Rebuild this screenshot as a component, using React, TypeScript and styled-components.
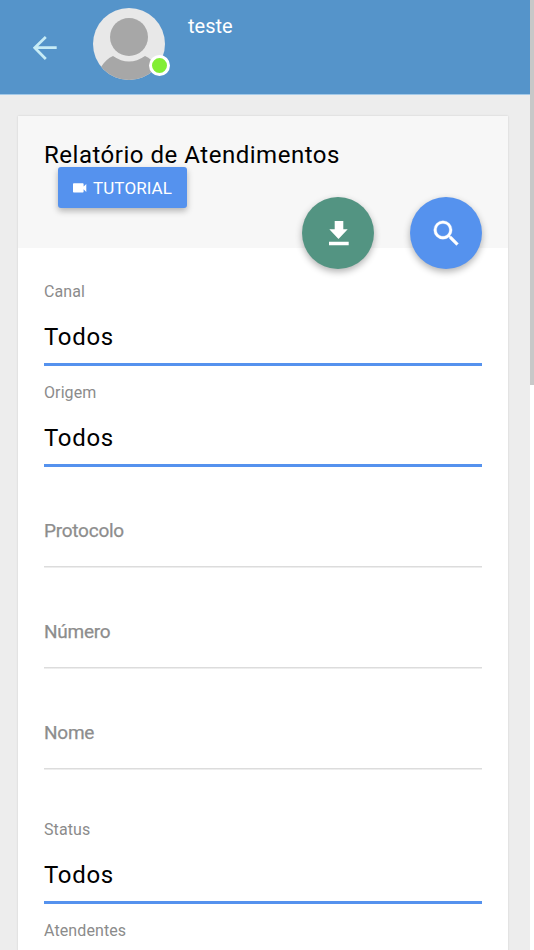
import React from "react";
import styled, { createGlobalStyle } from "styled-components";

const GlobalStyle = createGlobalStyle`
  *, *::before, *::after { box-sizing: border-box; }
  html, body { margin: 0; height: 950px; overflow: hidden; }
  body { background: #fff; font-family: Roboto, "Liberation Sans", sans-serif; color: #000; }
  button, input { font-family: inherit; }
`;

const Screen = styled.div`
  display: flex;
  width: 534px;
  height: 950px;
  overflow: hidden;
`;

const Page = styled.div`
  flex: 0 0 530px;
  height: 950px;
  background: #ededed;
  overflow: hidden;
`;

const ScrollThumb = styled.div`
  flex: 1;
  height: 385px;
  background: #c8c8c8;
`;

const TopBar = styled.header`
  display: flex;
  align-items: flex-start;
  height: 95px;
  background: #5594ca;
  border-bottom: 1px solid #a3c9e8;
`;

const BackButton = styled.button`
  margin: 36px 0 0 33px;
  padding: 0;
  width: 24px;
  height: 24px;
  border: 0;
  background: none;
`;

const Avatar = styled.div`
  position: relative;
  margin: 8px 0 0 36px;
  width: 72px;
  height: 72px;
`;

const OnlineDot = styled.span`
  position: absolute;
  left: 56px;
  top: 47px;
  width: 21px;
  height: 21px;
  border: 3px solid #fff;
  border-radius: 50%;
  background: #83ee34;
`;

const UserName = styled.span`
  margin: 13px 0 0 23px;
  font-size: 20px;
  line-height: 26px;
  color: #fff;
`;

const Card = styled.main`
  margin: 21px 22px 0 18px;
  height: 860px;
  background: #fff;
  box-shadow: 0 0 2px rgba(0, 0, 0, 0.13);
`;

const CardHeader = styled.div`
  display: flex;
  flex-direction: column;
  align-items: flex-start;
  height: 132px;
  padding: 26px 26px 0;
  background: #f7f7f7;
`;

const Title = styled.h1`
  margin: 0;
  height: 25px;
  font-size: 24px;
  font-weight: 400;
  line-height: 27px;
  letter-spacing: 0.52px;
  white-space: nowrap;
`;

const TutorialButton = styled.button`
  display: flex;
  align-items: center;
  gap: 5px;
  flex: none;
  width: 129px;
  height: 41px;
  margin-left: 14px;
  padding: 0 0 0 15px;
  border: 0;
  border-radius: 3px;
  background: #5592ee;
  box-shadow: 0 3px 6px rgba(0, 0, 0, 0.28);
  color: #fff;
  font-size: 17px;
  line-height: 20px;
  letter-spacing: 0.1px;
`;

const Actions = styled.div`
  display: flex;
  align-self: flex-end;
  flex: none;
  gap: 36px;
  margin-top: -11px;
`;

const RoundButton = styled.button<{ $color: string }>`
  display: flex;
  align-items: center;
  justify-content: center;
  width: 72px;
  height: 72px;
  padding: 0;
  border: 0;
  border-radius: 50%;
  background: ${({ $color }) => $color};
  box-shadow: 0 3px 7px rgba(0, 0, 0, 0.3);
`;

const Form = styled.form`
  padding: 17px 26px 0;
`;

const SelectField = styled.div<{ $gap?: number }>`
  height: 101px;
  margin-top: ${({ $gap = 0 }) => $gap}px;
  padding-top: 17px;
  border-bottom: 3px solid #5592ee;
`;

const Label = styled.div`
  font-size: 16px;
  line-height: 20px;
  letter-spacing: 0.1px;
  color: #8b8b8b;
`;

const Value = styled.div`
  margin-top: 19px;
  font-size: 24px;
  line-height: 32px;
  letter-spacing: 0.7px;
`;

const TextField = styled.input`
  display: block;
  width: 100%;
  height: 101px;
  padding: 26px 0 0;
  border: 0;
  background: linear-gradient(#dcdcdc, #dcdcdc) 0 99px / 100% 1.5px no-repeat;
  font-size: 19px;
  letter-spacing: -0.25px;
  outline: 0;
  &::placeholder { color: #8d8d8d; opacity: 1; -webkit-text-stroke: 0.25px #8d8d8d; }
`;

interface SelectProps {
  label: string;
  value?: string;
  gap?: number;
}

function Select({ label, value, gap }: SelectProps) {
  return (
    <SelectField $gap={gap}>
      <Label>{label}</Label>
      {value && <Value>{value}</Value>}
    </SelectField>
  );
}

export default function App() {
  return (
    <>
      <GlobalStyle />
      <Screen>
        <Page>
          <TopBar>
            <BackButton aria-label="Voltar">
              <svg width="24" height="24" viewBox="0 0 24 24" fill="none" stroke="#c7ecf6" strokeWidth="2.7">
                <path d="M23.7 11.700H2M12.800 1L1.700 11.700L12.800 23" />
              </svg>
            </BackButton>
            <Avatar>
              <svg width="72" height="72" viewBox="0 0 72 72">
                <defs>
                  <clipPath id="avatar-circle"><circle cx="36" cy="36" r="36" /></clipPath>
                </defs>
                <g clipPath="url(#avatar-circle)">
                  <rect width="72" height="72" fill="#e8e8e8" />
                  <circle cx="36" cy="29" r="19" fill="#a7a7a7" />
                  <path d="M8 59Q13 51 20 48Q36 59 52 48Q59 51 64 59V74H8Z" fill="#a7a7a7" />
                </g>
              </svg>
              <OnlineDot />
            </Avatar>
            <UserName>teste</UserName>
          </TopBar>
          <Card>
            <CardHeader>
              <Title>Relatório de Atendimentos</Title>
              <TutorialButton>
                <svg width="15" height="10" viewBox="0 0 15 10" fill="#fff">
                  <path d="M.8.300H9.800Q10.600.300 10.600 1.100V3.600L13.300 1V9L10.600 6.200V8.800Q10.600 9.600 9.800 9.600H.8Q0 9.600 0 8.800V1.100Q0 .300.8.300Z" />
                </svg>
                TUTORIAL
              </TutorialButton>
              <Actions>
                <RoundButton $color="#539482" aria-label="Baixar">
                  <svg width="36" height="36" viewBox="0 0 36 36" fill="#fff">
                    <path d="M14.700 6H23.300V14.300H27.700L18.500 24L9.300 14.300H14.700ZM9 26.800H28.700V30.200H9Z" />
                  </svg>
                </RoundButton>
                <RoundButton $color="#5592ee" aria-label="Pesquisar">
                  <svg width="34" height="34" viewBox="0 0 24 24" fill="#fff" stroke="#fff" strokeWidth="0.2">
                    <path transform="translate(.35 .35)" d="M15.5 14h-.79l-.28-.27A6.470 6.470 0 0 0 16 9.500 6.500 6.500 0 1 0 9.500 16c1.610 0 3.090-.59 4.230-1.570l.27.28v.79l5 4.990L20.490 19l-4.990-5zm-6 0C7.010 14 5 11.990 5 9.500S7.010 5 9.500 5 14 7.010 14 9.500 11.990 14 9.500 14z" />
                  </svg>
                </RoundButton>
              </Actions>
            </CardHeader>
            <Form>
              <Select label="Canal" value="Todos" />
              <Select label="Origem" value="Todos" />
              <TextField placeholder="Protocolo" />
              <TextField placeholder="Número" />
              <TextField placeholder="Nome" />
              <Select label="Status" value="Todos" gap={33} />
              <Select label="Atendentes" />
            </Form>
          </Card>
        </Page>
        <ScrollThumb />
      </Screen>
    </>
  );
}
